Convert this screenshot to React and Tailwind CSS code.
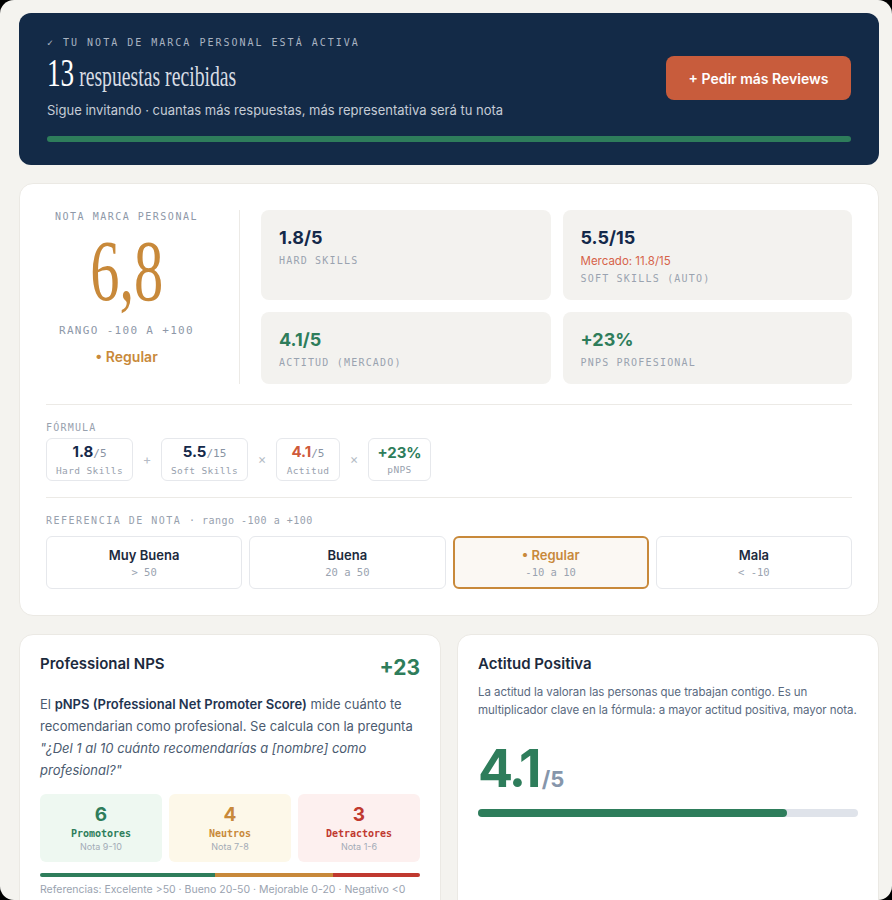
import React from "react";

const mono = "font-['DejaVu_Sans_Mono',monospace]";
const serif = "font-['Liberation_Serif',serif]";

const scoreBoxes = [
  { value: "1.8/5", color: "text-[#14294a]", label: "HARD SKILLS" },
  { value: "5.5/15", color: "text-[#14294a]", label: "SOFT SKILLS (AUTO)", note: "Mercado: 11.8/15" },
  { value: "4.1/5", color: "text-[#2e7d5b]", label: "ACTITUD (MERCADO)" },
  { value: "+23%", color: "text-[#2e7d5b]", label: "PNPS PROFESIONAL" },
];

const references = [
  { title: "Muy Buena", range: "> 50" },
  { title: "Buena", range: "20 a 50" },
  { title: "• Regular", range: "-10 a 10", active: true },
  { title: "Mala", range: "< -10" },
];

function FormulaBox({ value, unit, label, color, width }) {
  return (
    <div className={`${width} h-[43px] rounded-[6px] border border-[#e6e8ec] flex flex-col items-center justify-center`}>
      <div className="leading-[18px]">
        <span className={`text-[15px] font-bold ${color}`}>{value}</span>
        {unit && <span className={`${mono} text-[11px] text-[#8893a3]`}>{unit}</span>}
      </div>
      <div className={`${mono} text-[9.5px] tracking-[0.04em] text-[#98a1ae] leading-[14px] mt-[1px]`}>{label}</div>
    </div>
  );
}

function Op({ children }) {
  return <span className="w-[10px] text-center text-[13px] text-[#b5bcc6]">{children}</span>;
}

export default function App() {
  return (
    <div className="bg-black">
      <div className="h-[900px] overflow-hidden rounded-[14px] bg-[#f4f3ef] pl-[19px] pr-[13px] pt-[13px] font-['Inter',sans-serif]">
        {/* ── Hero ── */}
        <div className="rounded-[12px] bg-[#132a47] px-[28px] pt-[23px] pb-[23px]">
          <div className="flex items-center justify-between">
            <div>
              <div className={`${mono} text-[10px] leading-[14px] tracking-[0.2em] text-[#a9b3c1]`}>
                ✓ TU NOTA DE MARCA PERSONAL ESTÁ ACTIVA
              </div>
              <div className="mt-[3px] h-[40px]">
                <span className={`${serif} inline-block origin-left scale-x-[0.68] whitespace-nowrap leading-none text-white`}>
                  <span className="text-[40px]">13</span>
                  <span className="text-[29px] text-[#d7dce4]"> respuestas recibidas</span>
                </span>
              </div>
              <div className="mt-[7px] text-[13px] leading-[20px] text-[#c5ccd6]">
                Sigue invitando · cuantas más respuestas, más representativa será tu nota
              </div>
            </div>
            <button className="h-[44px] w-[185px] rounded-[8px] bg-[#c85c3c] text-[14px] font-semibold text-white">
              + Pedir más Reviews
            </button>
          </div>
          <div className="mt-[16px] h-[6px] rounded-full bg-[#2e7d5b]" />
        </div>

        {/* ── Nota card ── */}
        <div className="mt-[18px] rounded-[14px] border border-[#ebe9e4] bg-white px-[26px] pt-[26px] pb-[26px]">
          <div className="flex">
            <div className="w-[194px] shrink-0 border-r border-[#eceae6] pr-[32px] flex flex-col items-center">
              <div className={`${mono} whitespace-nowrap text-[10px] leading-[14px] tracking-[0.15em] text-[#8e98a8]`}>NOTA MARCA PERSONAL</div>
              <div className="mt-[4px] h-[86px]">
                <span className={`${serif} inline-block scale-x-[0.68] text-[86px] leading-none text-[#c8893a]`}>6,8</span>
              </div>
              <div className={`${mono} mt-[9px] whitespace-nowrap text-[11px] leading-[16px] tracking-[0.12em] text-[#8e98a8]`}>RANGO -100 A +100</div>
              <div className="mt-[8px] text-[14px] font-semibold leading-[20px] text-[#c8893a]">• Regular</div>
            </div>
            <div className="ml-[21px] grid flex-1 grid-cols-2 gap-[12px]">
              {scoreBoxes.map(b => (
                <div key={b.label} className="rounded-[8px] bg-[#f3f2ef] px-[18px] pt-[17px] pb-[14px]">
                  <div className={`text-[18px] font-bold leading-[22px] ${b.color}`}>{b.value}</div>
                  {b.note && <div className="mt-[4px] text-[11.5px] leading-[16px] text-[#d6634a]">{b.note}</div>}
                  <div className={`${mono} ${b.note ? "mt-[3px]" : "mt-[5px]"} text-[10px] leading-[14px] tracking-[0.12em] text-[#9aa3b0]`}>
                    {b.label}
                  </div>
                </div>
              ))}
            </div>
          </div>

          <div className="mt-[20px] border-t border-[#eceae6] pt-[16px]">
            <div className={`${mono} text-[10px] leading-[14px] tracking-[0.12em] text-[#98a1ae]`}>FÓRMULA</div>
            <div className="mt-[3px] flex items-center gap-[9px]">
              <FormulaBox value="1.8" unit="/5" label="Hard Skills" color="text-[#14294a]" width="w-[87px]" />
              <Op>+</Op>
              <FormulaBox value="5.5" unit="/15" label="Soft Skills" color="text-[#14294a]" width="w-[87px]" />
              <Op>×</Op>
              <FormulaBox value="4.1" unit="/5" label="Actitud" color="text-[#cf5a3a]" width="w-[64px]" />
              <Op>×</Op>
              <FormulaBox value="+23%" label="pNPS" color="text-[#2e7d5b]" width="w-[63px]" />
            </div>
          </div>

          <div className="mt-[16px] border-t border-[#eceae6] pt-[16px]">
            <div className={`${mono} text-[10px] leading-[14px] tracking-[0.15em] text-[#98a1ae]`}>
              REFERENCIA DE NOTA <span className="tracking-[0.05em]">· rango -100 a +100</span>
            </div>
            <div className="mt-[8px] grid grid-cols-4 gap-[7px]">
              {references.map(r => (
                <div
                  key={r.title}
                  className={`flex h-[53px] flex-col items-center justify-center rounded-[6px] ${
                    r.active ? "border-2 border-[#c8893a] bg-[#fbf8f3]" : "border border-[#e6e8ec] bg-white"
                  }`}
                >
                  <div className={`text-[13px] font-semibold leading-[18px] ${r.active ? "text-[#c8893a]" : "text-[#1c2a3d]"}`}>{r.title}</div>
                  <div className={`${mono} mt-[1px] text-[10.5px] leading-[15px] text-[#9aa3b0]`}>{r.range}</div>
                </div>
              ))}
            </div>
          </div>
        </div>

        {/* ── Bottom cards ── */}
        <div className="mt-[18px] grid grid-cols-2 gap-[16px]">
          <div className="h-[300px] rounded-[14px] border border-[#ebe9e4] bg-white px-[20px] pt-[19px]">
            <div className="flex items-start justify-between">
              <div className="text-[15px] font-semibold leading-[20px] text-[#1c2a3d]">Professional NPS</div>
              <div className="text-[21px] font-bold leading-[28px] text-[#2e7d5b]">+23</div>
            </div>
            <p className="mt-[11px] text-[13px] leading-[22px] text-[#4b5b70]">
              El <b className="font-semibold text-[#1f3450]">pNPS (Professional Net Promoter Score)</b> mide cuánto te
              recomendarian como profesional. Se calcula con la pregunta{" "}
              <i>"¿Del 1 al 10 cuánto recomendarías a [nombre] como profesional?"</i>
            </p>
            <div className="mt-[13px] grid grid-cols-3 gap-[7px]">
              {[
                { n: "6", l: "Promotores", s: "Nota 9-10", bg: "bg-[#eef8f1]", c: "text-[#2e7d5b]" },
                { n: "4", l: "Neutros", s: "Nota 7-8", bg: "bg-[#fdf8e9]", c: "text-[#c8893a]" },
                { n: "3", l: "Detractores", s: "Nota 1-6", bg: "bg-[#fdf0ef]", c: "text-[#c0392f]" },
              ].map(x => (
                <div key={x.l} className={`flex h-[68px] flex-col items-center rounded-[6px] pt-[9px] ${x.bg}`}>
                  <div className={`text-[19px] font-bold leading-[24px] ${x.c}`}>{x.n}</div>
                  <div className={`${mono} text-[10px] font-bold leading-[14px] ${x.c}`}>{x.l}</div>
                  <div className="text-[9px] leading-[12px] text-[#a3abb6]">{x.s}</div>
                </div>
              ))}
            </div>
            <div className="mt-[11px] flex h-[4px] overflow-hidden rounded-full">
              <div className="w-[46%] bg-[#2e7d5b]" />
              <div className="w-[31%] bg-[#c8893a]" />
              <div className="w-[23%] bg-[#c0392f]" />
            </div>
            <div className="mt-[5px] text-[10.5px] leading-[16px] text-[#9aa3b0]">
              Referencias: Excelente &gt;50 · Bueno 20-50 · Mejorable 0-20 · Negativo &lt;0
            </div>
          </div>

          <div className="h-[300px] rounded-[14px] border border-[#ebe9e4] bg-white px-[20px] pt-[19px]">
            <div className="text-[15px] font-semibold leading-[20px] text-[#1c2a3d]">Actitud Positiva</div>
            <p className="mt-[9px] text-[11.5px] leading-[18px] tracking-[-0.005em] text-[#5a6a80]">
              La actitud la valoran las personas que trabajan contigo. Es un multiplicador clave en la fórmula: a mayor actitud positiva, mayor nota.
            </p>
            <div className="mt-[24px] flex items-baseline">
              <span className="text-[52px] font-bold leading-none tracking-[-0.05em] text-[#2e7d5b]">4.1</span>
              <span className="ml-[3px] text-[22px] font-bold text-[#8696ab]">/5</span>
            </div>
            <div className="mt-[13px] h-[8px] rounded-full bg-[#dfe3ea]">
              <div className="h-full rounded-full bg-[#2e7d5b]" style={{ width: `${(4.1 / 5) * 100 - 0.6}%` }} />
            </div>
          </div>
        </div>
      </div>
    </div>
  );
}
